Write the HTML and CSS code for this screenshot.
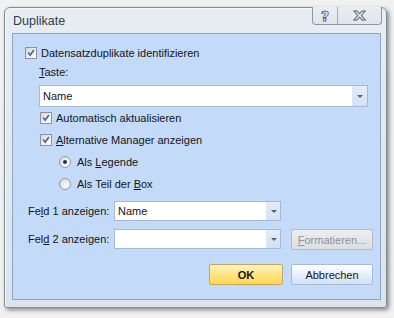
FILE: index.html
```html
<!DOCTYPE html>
<html lang="de">
<head>
    <meta charset="UTF-8">
    <title>Duplikate</title>
    <link rel="stylesheet" href="styles.css">
</head>
<body>
    <div class="window">
        <div class="titlebar">
            <span class="title">Duplikate</span>
            <div class="caption-buttons">
                <span class="cap-btn help">?</span>
                <span class="cap-btn close">X</span>
            </div>
        </div>

        <div class="client">
            <div class="row check-row row-main">
                <span class="check"><svg viewBox="0 0 12 12"><path d="M2.5 5.5 L5 8.5 L9.5 2.5" /></svg></span>
                Datensatzduplikate identifizieren
            </div>
            <div class="taste"><u>T</u>aste:</div>
            <div class="combo combo-wide">
                <span class="combo-value">Name</span>
                <span class="drop"><span class="arrow"></span></span>
            </div>

            <div class="row check-row row-sub">
                <span class="check"><svg viewBox="0 0 12 12"><path d="M2.5 5.5 L5 8.5 L9.5 2.5" /></svg></span>
                Automatisch aktualisieren
            </div>
            <div class="row check-row row-sub">
                <span class="check"><svg viewBox="0 0 12 12"><path d="M2.5 5.5 L5 8.5 L9.5 2.5" /></svg></span>
                <span><u>A</u>lternative Manager anzeigen</span>
            </div>
            <div class="row radio-row">
                <span class="radio selected"></span>
                <span>Als <u>L</u>egende</span>
            </div>
            <div class="row radio-row">
                <span class="radio"></span>
                <span>Als Teil der <u>B</u>ox</span>
            </div>

            <div class="field-row field-1">
                <span class="field-label">Fe<u>l</u>d 1 anzeigen:</span>
                <div class="combo combo-small">
                    <span class="combo-value">Name</span>
                    <span class="drop"><span class="arrow"></span></span>
                </div>
            </div>
            <div class="field-row field-2">
                <span class="field-label">Fel<u>d</u> 2 anzeigen:</span>
                <div class="combo combo-small">
                    <span class="combo-value"></span>
                    <span class="drop"><span class="arrow"></span></span>
                </div>
                <button class="btn btn-disabled" disabled><u>F</u>ormatieren...</button>
            </div>

            <div class="actions">
                <button class="btn btn-ok">OK</button>
                <button class="btn btn-cancel">Abbrechen</button>
            </div>
        </div>
    </div>
</body>
</html>
```

FILE: styles.css
```css
* {
    margin: 0;
    padding: 0;
    box-sizing: border-box;
}

body {
    width: 394px;
    height: 318px;
    overflow: hidden;
    background: #f1f1f1;
    font-family: 'Liberation Sans', Arial, sans-serif;
    font-size: 11px;
    color: #141414;
}

.window {
    margin: 7px 0 0 4px;
    width: 383px;
    height: 301px;
    border: 1px solid #7f8c9b;
    border-radius: 6px 6px 3px 3px;
    background: linear-gradient(180deg, #e8edf2 0%, #dde3eb 100%);
    box-shadow: 2px 2px 4px rgba(0, 0, 0, 0.45), inset 1px 1px 0 #f6f8fa;
    display: flex;
    flex-direction: column;
}

.titlebar {
    height: 25px;
    display: flex;
    align-items: center;
    padding-left: 8px;
}

.title {
    font-size: 12.5px;
    color: #2e3c4e;
    flex: 1;
}

.caption-buttons {
    align-self: flex-start;
    margin-top: -1px;
    margin-right: 4px;
    display: flex;
    height: 18px;
    border: 1px solid #8b97a6;
    border-top: none;
    border-radius: 0 0 4px 4px;
    background: linear-gradient(180deg, #eaeef3, #e0e6ed);
}

.cap-btn {
    display: flex;
    align-items: center;
    justify-content: center;
    font-family: 'DejaVu Sans', sans-serif;
    font-weight: bold;
    color: #ffffff;
    -webkit-text-stroke: 0.9px #5b6470;
}

.help {
    width: 25px;
    font-size: 14px;
    border-right: 1px solid #a4afbc;
}

.close {
    width: 43px;
    font-size: 13px;
    transform: scaleX(1.2);
}

.client {
    margin: 0 5px 7px 7px;
    flex: 1;
    border: 1px solid #8ea5c3;
    background: #c3dbf8;
}

.row {
    height: 22px;
    display: flex;
    align-items: center;
}

.row-main {
    margin-top: 8px;
    padding-left: 12px;
    gap: 4px;
}

.row-sub {
    padding-left: 27px;
    gap: 4px;
}

.check {
    width: 12px;
    height: 12px;
    border: 1px solid #8e9297;
    background: linear-gradient(135deg, #d3d7dc 0%, #f1f2f4 65%, #ffffff 100%);
    display: flex;
}

.check svg {
    width: 10px;
    height: 10px;
}

.check path {
    fill: none;
    stroke: #52678a;
    stroke-width: 2;
}

.taste {
    height: 16px;
    line-height: 16px;
    padding-left: 26px;
}

.combo {
    display: flex;
    background: #ffffff;
    border: 1px solid #a7bad3;
}

.combo-wide {
    margin: 5px 12px 0 26px;
    height: 22px;
}

.combo-value {
    flex: 1;
    display: flex;
    align-items: center;
    padding-left: 3px;
}

.drop {
    width: 15px;
    display: flex;
    align-items: center;
    justify-content: center;
    border-left: 1px solid #dfe7f1;
    background: linear-gradient(180deg, #e4edf8, #d4e1f2);
}

.arrow {
    width: 0;
    height: 0;
    border-left: 3px solid transparent;
    border-right: 3px solid transparent;
    border-top: 3px solid #4d6384;
}

.radio-row {
    padding-left: 46px;
    gap: 6px;
}

.radio {
    width: 12px;
    height: 12px;
    border-radius: 50%;
    border: 1px solid #979ba1;
    background: radial-gradient(circle at 65% 65%, #ffffff 0%, #e9eaec 45%, #cfd2d6 100%);
    display: flex;
    align-items: center;
    justify-content: center;
}

.radio.selected::after {
    content: "";
    width: 4px;
    height: 4px;
    border-radius: 50%;
    background: #2a3340;
}

.field-row {
    display: flex;
    align-items: flex-start;
    padding-left: 15px;
}

.field-1 {
    margin-top: 6px;
    height: 20px;
}

.field-2 {
    margin-top: 8px;
    height: 21px;
}

.field-label {
    width: 86px;
    height: 20px;
    line-height: 20px;
}

.combo-small {
    width: 167px;
    height: 20px;
}

.combo-small .drop {
    width: 14px;
}

.btn {
    height: 21px;
    font-family: inherit;
    font-size: 11px;
    border-radius: 2px;
    color: #141414;
}

.btn-disabled {
    margin-left: 10px;
    width: 82px;
    color: #8e9196;
    border: 1px solid #b7bbc0;
    background: linear-gradient(180deg, #eceef0, #dcdfe2);
}

.actions {
    margin-top: 14px;
    display: flex;
    justify-content: flex-end;
    gap: 8px;
    padding-right: 7px;
}

.btn-ok {
    width: 74px;
    font-weight: bold;
    border: 1px solid #c6a65e;
    background: linear-gradient(180deg, #fff3c4 0%, #ffe68a 45%, #ffd64e 100%);
}

.btn-cancel {
    width: 82px;
    border: 1px solid #a5bad6;
    background: linear-gradient(180deg, #ffffff 0%, #eaf1fb 45%, #d2e1f5 100%);
}
```
